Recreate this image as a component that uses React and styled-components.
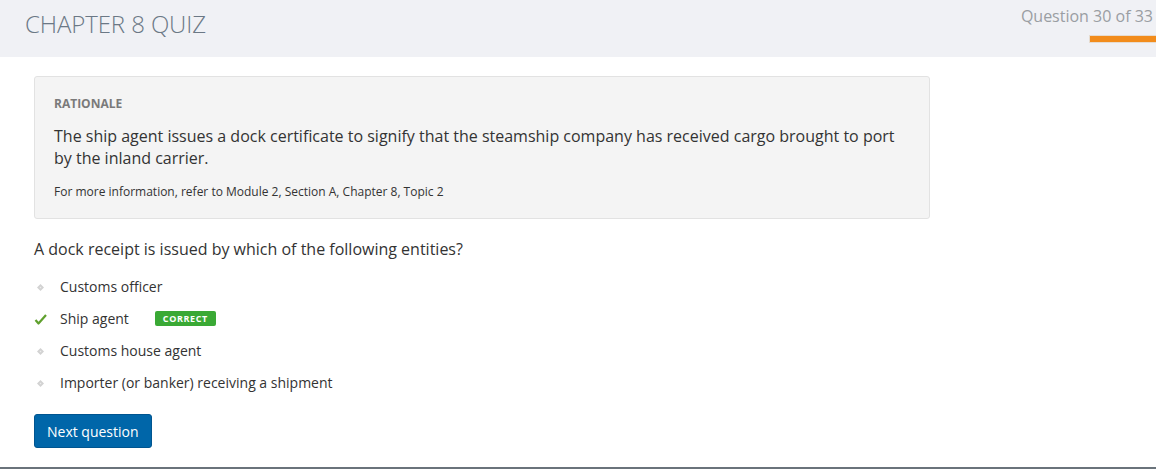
import React from "react";
import styled, { createGlobalStyle } from "styled-components";

const Global = createGlobalStyle`
  html, body { margin: 0; padding: 0; background: #fff; }
  body { font-family: "Open Sans", "Noto Sans", sans-serif; color: #333; }
  * { box-sizing: border-box; }
`;

const Page = styled.div`
  width: 1156px;
  height: 469px;
  display: flex;
  flex-direction: column;
  border-bottom: 2px solid #6a737b;
  overflow: hidden;
`;

const Header = styled.header`
  height: 57px;
  background: #f0f1f5;
  display: flex;
  justify-content: space-between;
  align-items: flex-start;
  padding-left: 25px;
`;

const Title = styled.h1`
  margin: 7px 0 0;
  font-size: 24px;
  font-weight: 300;
  color: #6b7885;
  letter-spacing: -0.1px;
`;

const Progress = styled.div`
  display: flex;
  flex-direction: column;
  align-items: flex-end;
  padding-top: 5px;
  margin-right: -2px;
`;

const Counter = styled.div`
  font-size: 16px;
  font-weight: 400;
  color: #9a9ea3;
  padding-right: 5px;
`;

const Bar = styled.div`
  margin-top: 8px;
  width: 69px;
  height: 8px;
  background: #f28c1c;
  border: 1px solid #e6dcd0;
  border-right: none;
`;

const Main = styled.main`
  padding: 19px 34px 0;
  display: flex;
  flex-direction: column;
`;

const Rationale = styled.section`
  width: 896px;
  background: #f4f4f4;
  border: 1px solid #e2e2e2;
  border-radius: 3px;
  padding: 19px 19px 18px 19px;
`;

const Label = styled.div`
  font-size: 12px;
  font-weight: 700;
  color: #7a7a7a;
  line-height: 16px;
`;

const Body = styled.p`
  margin: 13px 0 0;
  font-size: 16px;
  line-height: 22px;
  color: #333;
`;

const Small = styled.p`
  margin: 15px 0 0;
  font-size: 12px;
  line-height: 16px;
  color: #333;
`;

const Question = styled.p`
  margin: 19px 0 0;
  font-size: 16px;
  line-height: 22px;
  color: #333;
`;

const Options = styled.ul`
  list-style: none;
  margin: 17px 0 0;
  padding: 0;
  display: flex;
  flex-direction: column;
  gap: 12px;
`;

const Option = styled.li`
  display: flex;
  align-items: center;
  height: 20px;
  font-size: 14px;
  color: #333;
`;

const Marker = styled.span`
  width: 26px;
  display: flex;
  align-items: center;
  justify-content: flex-start;
  padding-left: ${(p) => (p.$check ? "0" : "3px")};
`;

const Text = styled.span`
  line-height: 20px;
`;

const Badge = styled.span`
  margin-left: 26px;
  margin-top: -2px;
  background: #3aa935;
  color: #fff;
  font-size: 9px;
  font-weight: 700;
  letter-spacing: 0.6px;
  padding: 0 8px;
  height: 15px;
  line-height: 15px;
  border-radius: 2px;
`;

const Button = styled.button`
  margin-top: 21px;
  align-self: flex-start;
  background: #0066a9;
  color: #fff;
  border: 1px solid #005590;
  border-radius: 3px;
  font-family: "Open Sans", sans-serif;
  font-size: 14px;
  font-weight: 400;
  height: 34px;
  padding: 0 12px;
  cursor: pointer;
`;

const Dot = () => (
  <svg width="7" height="7" viewBox="0 0 7 7">
    <path d="M3.5 0 L7 3.5 L3.5 7 L0 3.5 Z" fill="#d2d2d2" />
    <rect x="2.8" y="2.8" width="1.4" height="1.4" fill="#ececec" />
  </svg>
);

const Check = () => (
  <svg width="13" height="11" viewBox="0 0 13 11">
    <path d="M1.5 6 L4.5 9.5 L12 1" fill="none" stroke="#5fa02d" strokeWidth="2.2" strokeLinejoin="round" />
  </svg>
);

const options = [
  { text: "Customs officer" },
  { text: "Ship agent", correct: true },
  { text: "Customs house agent" },
  { text: "Importer (or banker) receiving a shipment" },
];

export default function App() {
  return (
    <>
      <Global />
      <Page>
        <Header>
          <Title>CHAPTER 8 QUIZ</Title>
          <Progress>
            <Counter>Question 30 of 33</Counter>
            <Bar />
          </Progress>
        </Header>
        <Main>
          <Rationale>
            <Label>RATIONALE</Label>
            <Body>
              The ship agent issues a dock certificate to signify that the steamship company has received cargo brought to port by the inland carrier.
            </Body>
            <Small>For more information, refer to Module 2, Section A, Chapter 8, Topic 2</Small>
          </Rationale>
          <Question>A dock receipt is issued by which of the following entities?</Question>
          <Options>
            {options.map((o) => (
              <Option key={o.text}>
                <Marker $check={o.correct}>{o.correct ? <Check /> : <Dot />}</Marker>
                <Text>{o.text}</Text>
                {o.correct && <Badge>CORRECT</Badge>}
              </Option>
            ))}
          </Options>
          <Button>Next question</Button>
        </Main>
      </Page>
    </>
  );
}
